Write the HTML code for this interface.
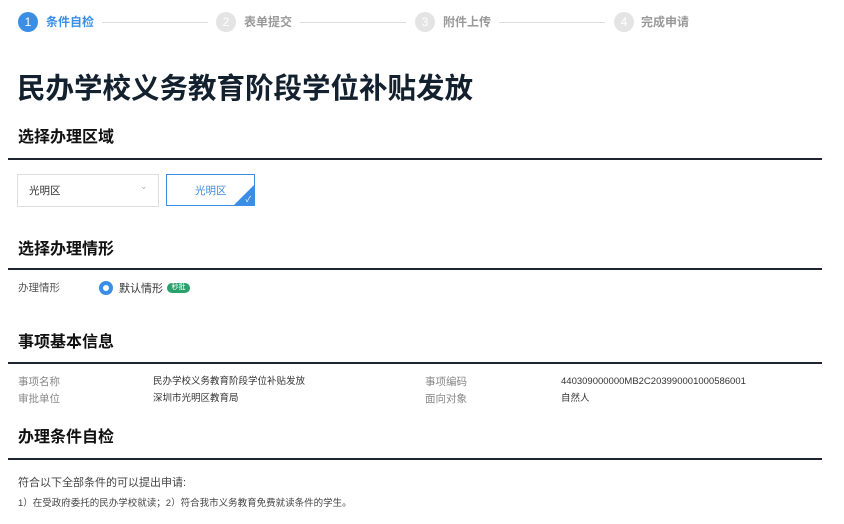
<!DOCTYPE html>
<html><head><meta charset="utf-8"><style>
body{margin:0;width:844px;height:524px;background:#fff;position:relative;overflow:hidden;font-family:"Liberation Sans","Noto Sans CJK SC",sans-serif;}
.a{position:absolute;white-space:nowrap;}
.c{position:absolute;width:20px;height:20px;border-radius:50%;font-size:12px;line-height:20px;text-align:center;color:#fff;}
.st{font-size:12px;font-weight:bold;line-height:16px;}
.ln{position:absolute;height:1px;background:#ddd;top:22px;}
.h{font-size:16px;font-weight:bold;color:#111;line-height:20px;}
.bar{position:absolute;left:8px;width:814px;height:2px;background:#1e2530;}
.s{font-size:10.5px;line-height:14px;}
.v{font-size:9.5px;color:#333;line-height:14px;}
</style></head><body>
<div class="c" style="left:18px;top:12px;background:#3a8ee6">1</div>
<div class="a st" style="left:46px;top:14px;color:#3a8ee6">条件自检</div>
<div class="ln" style="left:102px;width:106px"></div>
<div class="c" style="left:216px;top:12px;background:#e4e4e4">2</div>
<div class="a st" style="left:244px;top:14px;color:#999">表单提交</div>
<div class="ln" style="left:300px;width:106px"></div>
<div class="c" style="left:415px;top:12px;background:#e4e4e4">3</div>
<div class="a st" style="left:443px;top:14px;color:#999">附件上传</div>
<div class="ln" style="left:499px;width:106px"></div>
<div class="c" style="left:614px;top:12px;background:#e4e4e4">4</div>
<div class="a st" style="left:641px;top:14px;color:#999">完成申请</div>

<div class="a" style="left:17px;top:71px;font-size:28.5px;font-weight:bold;color:#13202e;line-height:36px">民办学校义务教育阶段学位补贴发放</div>

<div class="a h" style="left:18px;top:128px">选择办理区域</div>
<div class="bar" style="top:158px"></div>
<div class="a" style="left:17px;top:174px;width:140px;height:31px;border:1px solid #ddd;"></div>
<div class="a s" style="left:29px;top:184px;color:#333">光明区</div>
<div class="a" style="left:140px;top:181px;font-size:9px;color:#aaa">⌄</div>
<div class="a" style="left:166px;top:174px;width:87px;height:30px;border:1px solid #3a8ee6;overflow:hidden">
<div class="a s" style="left:28px;top:9px;color:#3a8ee6">光明区</div>
<div class="a" style="right:0;bottom:0;width:0;height:0;border-left:20px solid transparent;border-bottom:20px solid #3a8ee6"></div>
<div class="a" style="right:3px;bottom:0px;color:#fff;font-size:8px">✓</div>
</div>

<div class="a h" style="left:18px;top:240px">选择办理情形</div>
<div class="bar" style="top:268px"></div>
<div class="a s" style="left:18px;top:281px;color:#555">办理情形</div>
<div class="a" style="left:99px;top:281px;width:6px;height:6px;border:4px solid #3a8ee6;border-radius:50%"></div>
<div class="a" style="left:119px;top:280px;font-size:11px;color:#333">默认情形</div>
<div class="a" style="left:167px;top:283px;width:23px;height:10px;border-radius:5px;background:#2aa06b;color:#fff;font-size:7px;line-height:10px;text-align:center">秒批</div>

<div class="a h" style="left:18px;top:333px">事项基本信息</div>
<div class="bar" style="top:362px"></div>
<div class="a s" style="left:18px;top:375px;color:#888">事项名称</div>
<div class="a s" style="left:18px;top:392px;color:#888">审批单位</div>
<div class="a v" style="left:153px;top:375px">民办学校义务教育阶段学位补贴发放</div>
<div class="a v" style="left:153px;top:392px">深圳市光明区教育局</div>
<div class="a s" style="left:425px;top:375px;color:#888">事项编码</div>
<div class="a s" style="left:425px;top:392px;color:#888">面向对象</div>
<div class="a v" style="left:561px;top:375px">440309000000MB2C203990001000586001</div>
<div class="a v" style="left:561px;top:392px">自然人</div>

<div class="a h" style="left:18px;top:428px">办理条件自检</div>
<div class="bar" style="top:458px"></div>
<div class="a" style="left:18px;top:474px;font-size:11px;color:#444">符合以下全部条件的可以提出申请:</div>
<div class="a" style="left:18px;top:495px;font-size:9.5px;color:#444">1）在受政府委托的民办学校就读；2）符合我市义务教育免费就读条件的学生。</div>
</body></html>
